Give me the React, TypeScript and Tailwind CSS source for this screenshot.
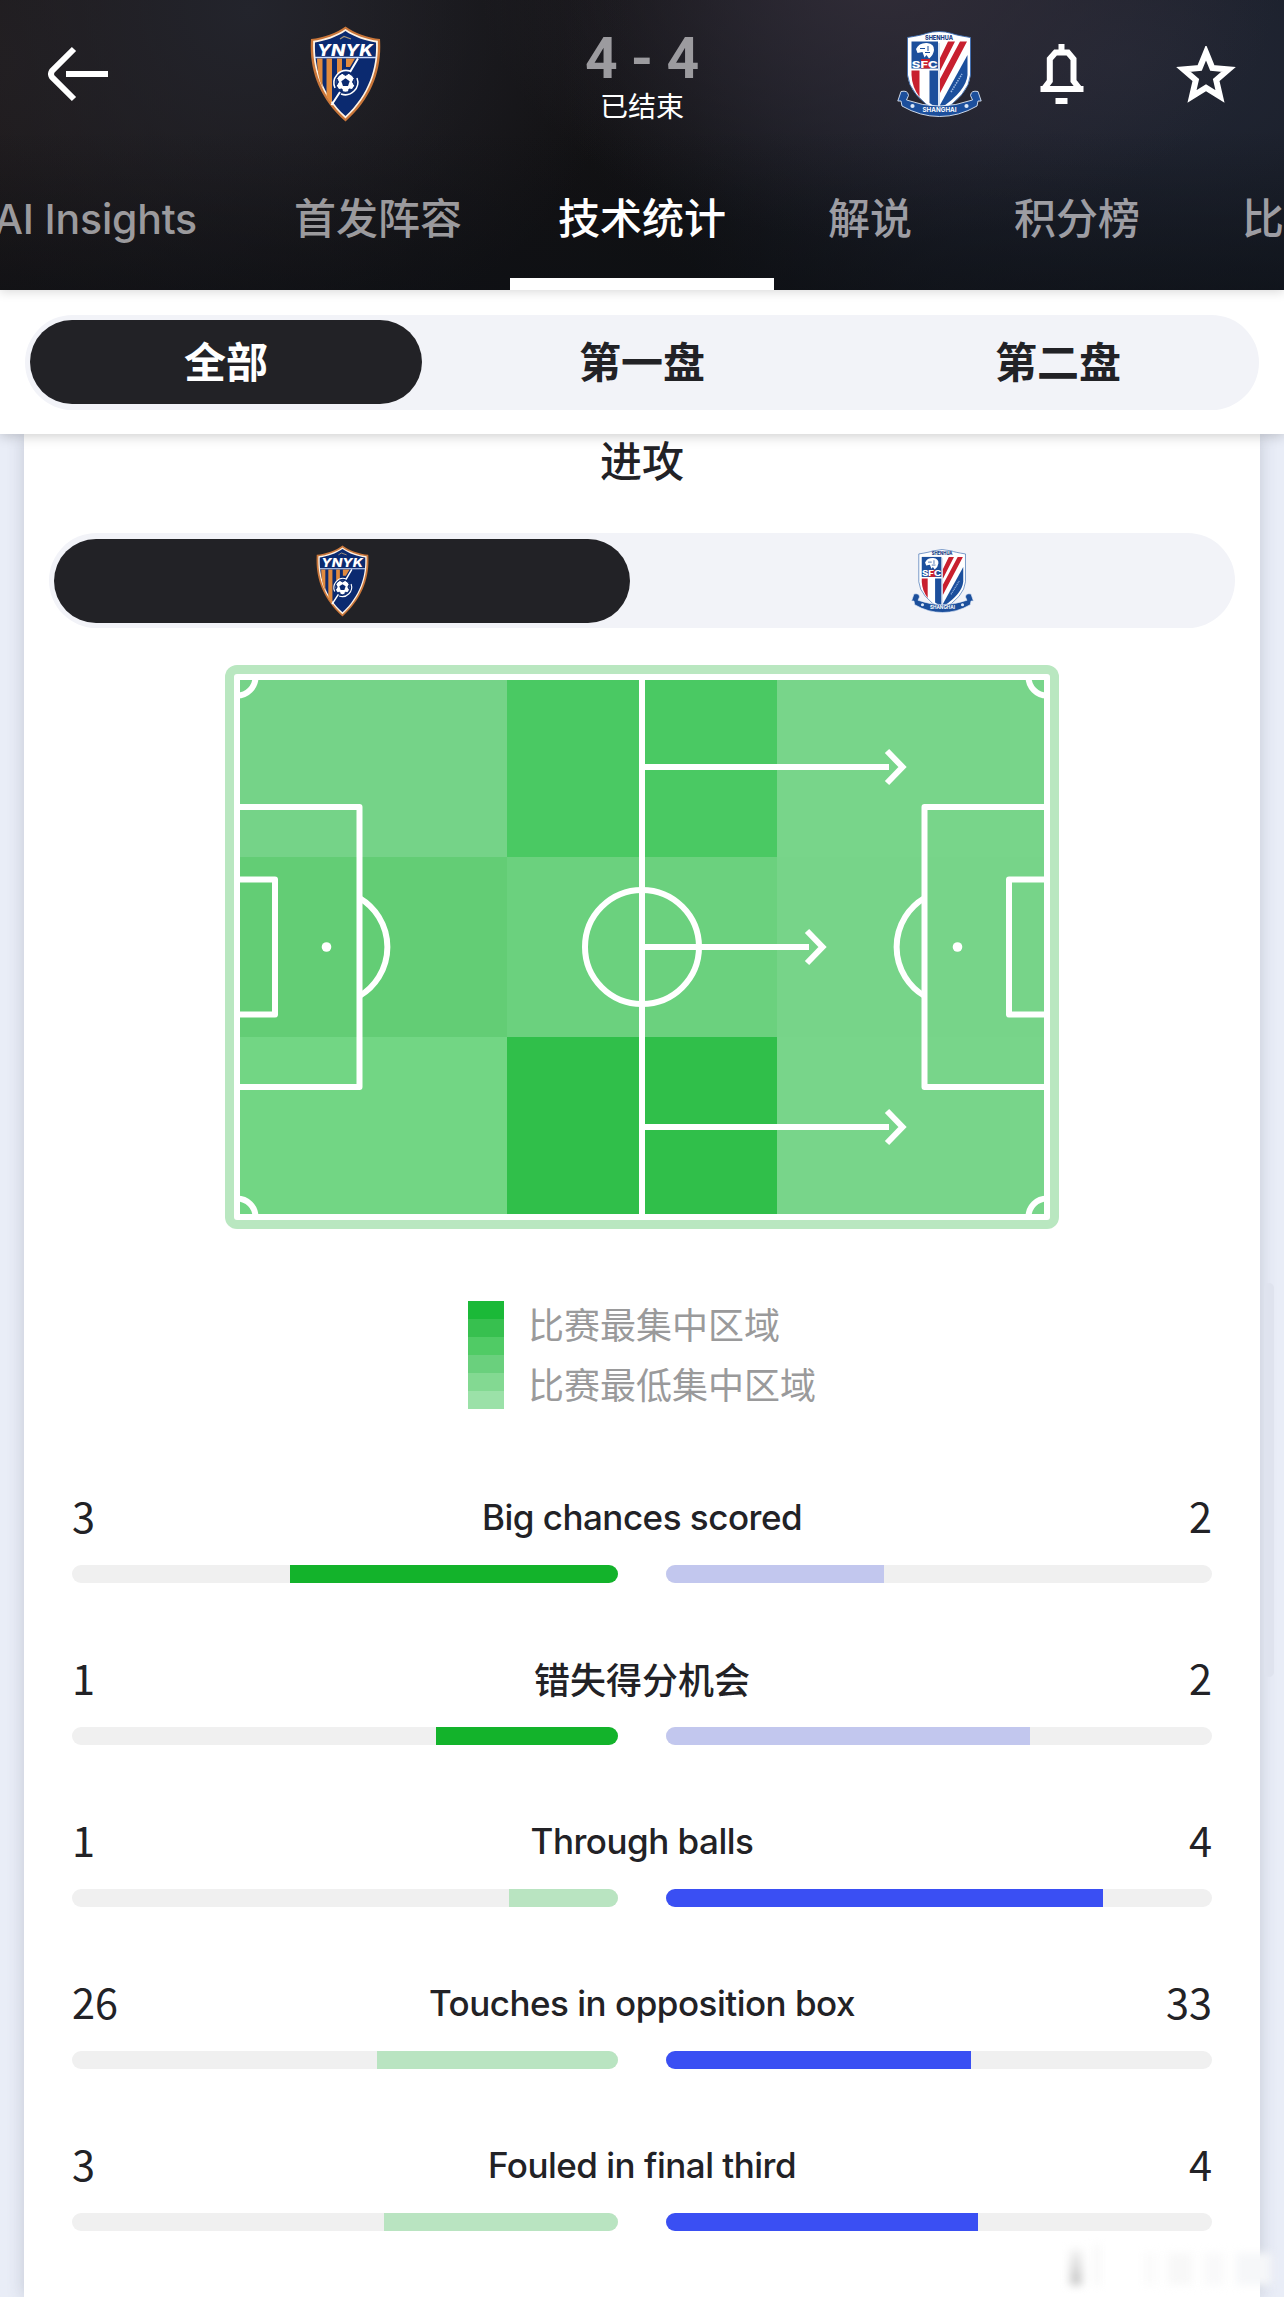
type Stat = {
  label: string;
  home: number;
  away: number;
  lead: "home" | "away";
  cjk?: boolean;
};

const tabs = [
  { label: "首发阵容", className: "ml-[97px] text-[#9b9a9d]" },
  { label: "技术统计", className: "ml-[96px] text-white" },
  { label: "解说", className: "ml-[102px] text-[#9d9da3]" },
  { label: "积分榜", className: "ml-[102px] text-[#9d9da3]" },
  { label: "比赛", className: "ml-[102px] text-[#9d9da3]" },
];

const periods = ["全部", "第一盘", "第二盘"];

const stats: Stat[] = [
  { label: "Big chances scored", home: 3, away: 2, lead: "home" },
  { label: "错失得分机会", home: 1, away: 2, lead: "home", cjk: true },
  { label: "Through balls", home: 1, away: 4, lead: "away" },
  { label: "Touches in opposition box", home: 26, away: 33, lead: "away" },
  { label: "Fouled in final third", home: 3, away: 4, lead: "away" },
];

// attack zones, row by row
const zones = [
  ["#75d388", "#4ac963", "#78d58a"],
  ["#63cd75", "#6bd17e", "#77d489"],
  ["#72d684", "#30bf4a", "#78d58a"],
];

function HomeCrest({ className }: { className: string }) {
  return (
    <svg viewBox="0 0 71 96" className={className}>
      <path d="M35.5 0.5 C27 7 13 12 1 13 C-1 42 8 71 35.5 95.5 C63 71 72 42 70 13 C58 12 44 7 35.5 0.5Z" fill="#c9763a" />
      <path d="M35.5 3 C27 9 14 13.5 3.2 14.8 C2 42 10.5 69.5 35.5 92.5 C60.5 69.5 69 42 67.8 14.8 C57 13.5 44 9 35.5 3Z" fill="#fff3e4" />
      <path d="M35.5 5 C27 11 15 15 5 16.4 C4 42 12 68 35.5 90 C59 68 67 42 66 16.4 C56 15 44 11 35.5 5Z" fill="#0b2a70" />
      <path d="M30 13 L34 10.5 L41 13" fill="none" stroke="#a9987b" strokeWidth="1.2" />
      <text x="35" y="29.5" textAnchor="middle" textLength="56" lengthAdjust="spacingAndGlyphs" fontSize="16.5" fontWeight="800" fontStyle="italic" fill="#fff" className="font-[Inter,sans-serif]">YNYK</text>
      <path d="M4.5 31.6H66.5" stroke="#cfe0ff" strokeWidth="1.5" />
      <path d="M7 32.5h5.5v29l-2.5-6c-2-7-3-15-3-23Z M16.5 32.5h5.5v43l-1.5 1-4-6Z M27 32.5h5v12l-5 3.5Z M36 32.5h9l-5 8.5h-4Z" fill="#e08a3e" />
      <path d="M48 32.5 L40 46 M30 66 L21.5 79" stroke="#fff" strokeWidth="2" />
      <path d="M25 62 A12.5 12.5 0 0 1 40 45 M31 68 A12.5 12.5 0 0 0 47 52" fill="none" stroke="#fff" strokeWidth="1.5" />
      <circle cx="35.5" cy="56.5" r="9.8" fill="#fff" stroke="#0b2a70" strokeWidth="1.2" />
      <path d="M35.5 52.2 L39.7 55.2 L38 60 H33 L31.3 55.2Z" fill="#0b2a70" />
      <path d="M32.5 47.5h6l-3 2Z M27 53l1.5 3-1.8 3Z M44 53l-1.5 3 1.8 3Z M29 63.5l3-.5.5 3Z M42 63.5l-3-.5-.5 3Z" fill="#0b2a70" stroke="#0b2a70" />
    </svg>
  );
}

function AwayCrest({ className }: { className: string }) {
  return (
    <svg viewBox="0 0 85 86" className={className}>
      <path d="M10.5 6.5 Q26 4 29 2.5 Q42 -1.5 55 2.5 Q58 4 73.5 6.5 V44 Q72 64 42 82 Q12 64 10.5 44Z" fill="#fff" stroke="#3b6bb0" strokeWidth="0.9" />
      <text x="42" y="8.6" textAnchor="middle" textLength="28" lengthAdjust="spacingAndGlyphs" fontSize="6.5" fontWeight="800" fill="#1b3f86" className="font-[Inter,sans-serif]">SHENHUA</text>
      <path d="M14.5 10.5H41V37.5H14.5Z" fill="#1c4f9c" />
      <path d="M24 28h9v9.5h-9Z" fill="#c8202f" />
      {/* lion head */}
      <path d="M19 18 Q22 11.5 30 12 Q37.5 13 37 19 Q36.5 24 32 27.5 L29.5 24 L27.5 26.5 L25.5 21 L20.5 22Z" fill="#fff" />
      <path d="M23 17.5h5M31 15v5M28 21.5h5" stroke="#1c4f9c" strokeWidth="1" fill="none" />
      <text x="27.8" y="36.6" textAnchor="middle" textLength="26" lengthAdjust="spacingAndGlyphs" fontSize="9.5" fontWeight="800" fill="#fff" className="font-[Inter,sans-serif]">SFC</text>
      <path d="M14.5 39.5H22.5V66Q15 56 14.5 44Z" fill="#c8202f" />
      <path d="M32.5 39.5H41V78L32.5 72Z" fill="#1c4f9c" />
      <path d="M51 10.5H58L43 40V27Z M63 10.5H70L43 62V48Z" fill="#c8202f" />
      <path d="M70.5 24V44Q69 60 44 77L43 74Z" fill="#1c4f9c" />
      <path d="M54 61L65 43" stroke="#9db9e2" strokeWidth="1.6" strokeDasharray="1.5 1" />
      <path d="M42 12V78" stroke="#9ab4da" strokeWidth="0.7" />
      <path d="M0.8 70 L4 60.5 Q11 59 11.5 64.5 L9.5 69 Q42 81 75.5 69 L73.5 64.5 Q74 59 81 60.5 L84.2 70 L81 70 L80 75 Q62 85.5 42.5 85.5 Q23 85.5 5 75 L4 70Z" fill="#1c4f9c" stroke="#dfe9f7" strokeWidth="0.9" />
      <circle cx="15.5" cy="75" r="2.1" fill="#dce8f8" />
      <circle cx="69.5" cy="75" r="2.1" fill="#dce8f8" />
      <text x="42.5" y="81.3" textAnchor="middle" textLength="34" lengthAdjust="spacingAndGlyphs" fontSize="6.8" fontWeight="700" fill="#fff" className="font-[Inter,sans-serif]">SHANGHAI</text>
    </svg>
  );
}

function Header() {
  return (
    <header className="relative z-20 h-[290px] overflow-hidden bg-[#101012] bg-[linear-gradient(180deg,#0c0f1400_45%,#0c0f1499_100%),radial-gradient(ellipse_380px_340px_at_250px_10px,#23242cff,#23242c00),radial-gradient(ellipse_460px_420px_at_0px_60px,#211c1dff,#211c1d00),radial-gradient(ellipse_400px_260px_at_880px_-20px,#322d38e6,#322d3800),radial-gradient(ellipse_560px_330px_at_1120px_60px,#242836e6,#24283600),linear-gradient(90deg,#181415_0%,#131214_40%,#111113_54%,#151820_74%,#141a24_100%)] shadow-[0_2px_10px_rgba(0,0,0,0.15)]">
      <div className="flex h-[148px] items-center pl-12">
        <svg viewBox="0 0 60 56" className="h-14 w-[60px]" fill="none" stroke="#fff" strokeWidth="6">
          <path d="M26 3 L4 25 Q2 28 4 31 L26 53" />
          <path d="M18 28H60" />
        </svg>
        <HomeCrest className="ml-[202px] h-24 w-[71px]" />
        <div className="ml-1.5 flex w-[510px] flex-col items-center">
          <div className="h-[62px] pt-[5px] text-[57px] leading-[58px] font-bold text-[#9c9b9f] font-[Roboto,sans-serif] [word-spacing:-1px]">4 - 4</div>
          <div className="h-9 text-[28px] leading-9 text-white">已结束</div>
        </div>
        <AwayCrest className="h-[86px] w-[85px]" />
        <svg viewBox="0 0 44 60" className="ml-[58px] h-[60px] w-11" fill="none" stroke="#fff" strokeWidth="6">
          <path d="M21.5 0V8" />
          <path d="M0.5 45H43.5" />
          <path d="M4.5 44 L9.8 37 V15 L15.5 8.5 H28 L33.5 15 V37 L39 44" />
          <path d="M15.5 57H27.5" />
        </svg>
        <svg viewBox="0 0 60 57" className="ml-[92px] h-[57px] w-[60px]" fill="none" stroke="#fff" strokeWidth="6">
          <path d="M30 6.5 L36.3 22 L52.5 23.4 L40.2 34 L44 50.5 L30 41.8 L16 50.5 L19.8 34 L7.5 23.4 L23.7 22Z" />
        </svg>
      </div>

      <nav className="flex h-[142px] items-center text-[42px] leading-[60px] font-medium whitespace-nowrap">
        <span className="ml-[-6px] w-[203px] shrink-0 font-[Inter,sans-serif] text-[41px] tracking-[-0.2px] text-[#9b9a9d]">AI Insights</span>
        {tabs.map((tab) => (
          <span key={tab.label} className={`pb-1.5 ${tab.className}`}>{tab.label}</span>
        ))}
      </nav>
      {/* active tab marker */}
      <div className="absolute bottom-0 left-[510px] h-3 w-[264px] bg-white" />
    </header>
  );
}

function PeriodTabs() {
  return (
    <div className="relative z-10 flex h-36 items-center justify-center bg-white shadow-[0_2px_12px_rgba(0,0,0,0.2)]">
      <div className="flex h-[95px] gap-6 rounded-full bg-[#f2f3f8] px-[5px] py-[5.5px]">
        {periods.map((period, i) => (
          <div
            key={period}
            className={`flex w-[392px] items-center justify-center rounded-full pb-1 text-[42px] leading-none font-bold ${i === 0 ? "bg-[#222226] text-white" : "text-[#222226]"}`}
          >
            {period}
          </div>
        ))}
      </div>
    </div>
  );
}

function Pitch() {
  return (
    <svg viewBox="225 665 834 564" className="mx-auto mt-[37px] block h-[564px] w-[834px]">
      <rect x="225" y="665" width="834" height="564" rx="12" fill="#b9e7c0" />
      {zones.map((row, r) =>
        row.map((color, c) => (
          <rect key={`${r}-${c}`} x={237 + c * 270} y={677 + r * 180} width="270" height="180" fill={color} shapeRendering="crispEdges" />
        ))
      )}
      <g fill="none" stroke="#fff" strokeWidth="6">
        <rect x="237" y="677" width="810" height="540" strokeLinejoin="round" />
        <path d="M642 677V1217" />
        <circle cx="642" cy="947" r="57" />
        <path strokeLinejoin="round" d="M237 807H359.5V1087H237M237 879.5H275V1014.5H237" />
        <path strokeLinejoin="round" d="M1047 807H924.5V1087H1047M1047 879.5H1009V1014.5H1047" />
        <path d="M359.5 898 A57 57 0 0 1 359.5 996M924.5 898 A57 57 0 0 0 924.5 996" />
        <path d="M255.5 677A18.5 18.5 0 0 1 237 695.5M1028.5 677A18.5 18.5 0 0 0 1047 695.5" />
        <path d="M255.5 1217A18.5 18.5 0 0 0 237 1198.5M1028.5 1217A18.5 18.5 0 0 1 1047 1198.5" />
        {/* attack directions */}
        <path d="M642 767H889M887 751L902.5 767L887 783" />
        <path d="M642 947H809M807 931L822.5 947L807 963" />
        <path d="M642 1127H889M887 1111L902.5 1127L887 1143" />
      </g>
      <circle cx="326.5" cy="947" r="4.8" fill="#fff" />
      <circle cx="957.5" cy="947" r="4.8" fill="#fff" />
    </svg>
  );
}

function Legend() {
  return (
    <div className="mt-[72px] flex h-[108px] items-center pl-[444px]">
      <div className="w-9">
        <div className="h-[18px] bg-[#1bb938]" />
        <div className="h-[18px] bg-[#37c04f]" />
        <div className="h-[18px] bg-[#50cb65]" />
        <div className="h-[18px] bg-[#6ad07d]" />
        <div className="h-[18px] bg-[#83d992]" />
        <div className="h-[18px] bg-[#9be1a8]" />
      </div>
      <div className="ml-6 pb-1 text-4xl leading-[60px] text-[#9a9a9b]">
        <div>比赛最集中区域</div>
        <div>比赛最低集中区域</div>
      </div>
    </div>
  );
}

function StatRow({ stat }: { stat: Stat }) {
  const total = stat.home + stat.away;
  const homeLeads = stat.lead === "home";

  return (
    <div className="h-[162px] text-[#222226]">
      <div className="flex h-[60px] items-center justify-between leading-[60px]">
        <div className="w-32 pb-[5px] text-[41.5px]">{stat.home}</div>
        <div className={stat.cjk ? "pb-[3px] text-4xl font-medium" : "font-[Inter,sans-serif] text-[35px] font-medium tracking-[-0.5px]"}>
          {stat.label}
        </div>
        <div className="w-32 pb-[5px] text-right text-[41.5px]">{stat.away}</div>
      </div>
      <div className="mt-[18px] flex gap-12">
        <div className="flex h-[18px] flex-1 justify-end overflow-hidden rounded-full bg-[#f0f0f0]">
          <div className={homeLeads ? "bg-[#13b32b]" : "bg-[#b9e4c1]"} style={{ width: `${(stat.home / total) * 100}%` }} />
        </div>
        <div className="flex h-[18px] flex-1 overflow-hidden rounded-full bg-[#f0f0f0]">
          <div className={homeLeads ? "bg-[#c2c7ee]" : "bg-[#3a4ff3]"} style={{ width: `${(stat.away / total) * 100}%` }} />
        </div>
      </div>
    </div>
  );
}

export default function App() {
  return (
    <div className="relative h-[2297px] w-[1284px] overflow-hidden bg-[#e9edf7] font-['Noto_Sans_CJK_SC',sans-serif]">
      <Header />
      <PeriodTabs />

      <main className="mx-6 h-[1863px] bg-white shadow-[0_0_16px_rgba(60,70,90,0.22)]">
        <h2 className="h-[53px] text-center text-[42px] leading-[50px] font-medium text-[#222226]">进攻</h2>

        <div className="mx-auto mt-[46px] flex h-[95px] w-[1186px] gap-6 rounded-full bg-[#f2f3f8] px-[5px] py-[5.5px]">
          <div className="flex flex-1 items-center justify-center rounded-full bg-[#222226]">
            <HomeCrest className="h-[72px] w-[53px]" />
          </div>
          <div className="flex flex-1 items-center justify-center">
            <AwayCrest className="h-16 w-[63px]" />
          </div>
        </div>

        <Pitch />
        <Legend />

        <div className="mt-[78px] px-12">
          {stats.map((stat) => (
            <StatRow key={stat.label} stat={stat} />
          ))}
        </div>
      </main>

      {/* scrollbar thumb */}
      <div className="absolute top-[1283px] right-2.5 h-[394px] w-2.5 rounded-full bg-[#dfe3ee]" />

      {/* faded mark in the corner */}
      <div className="absolute right-3 bottom-3 flex h-10 items-end gap-3 blur-[4px]">
        <div className="h-9 w-3 bg-linear-to-t from-[#c4c4c4] to-[#f4f4f4]" />
        <div className="h-10 w-1.5 bg-[#f6f6f6]" />
        <div className="ml-8 h-8 w-3 bg-[#fafafa]" />
        <div className="h-8 w-6 bg-[#f8f8f8]" />
        <div className="h-8 w-5 bg-[#f9f9fa]" />
        <div className="h-8 w-9 bg-[#f6f7f9]" />
      </div>
    </div>
  );
}
